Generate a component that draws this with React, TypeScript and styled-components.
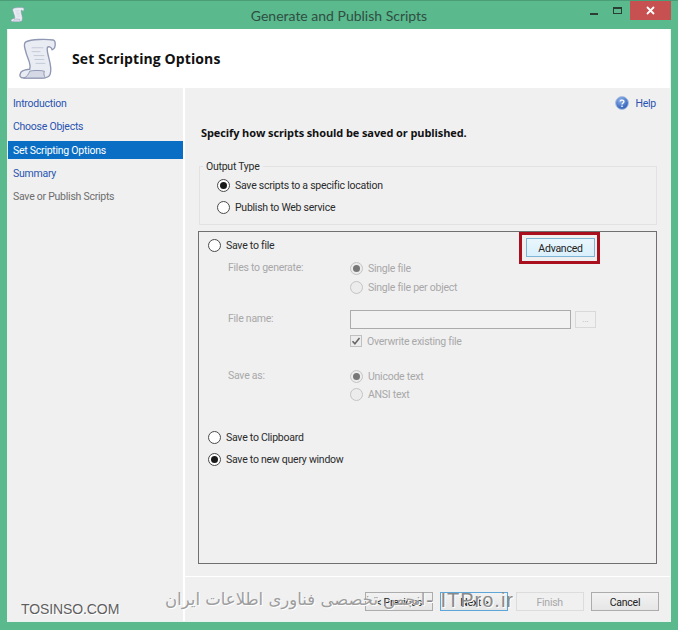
import React from 'react'
import styled, { createGlobalStyle } from 'styled-components'

const Global = createGlobalStyle`
  html, body { margin: 0; padding: 0; background: #5ab98d; }
  * { box-sizing: border-box; }
`

const Window = styled.div`
  position: relative;
  width: 678px;
  height: 630px;
  overflow: hidden;
  display: flex;
  flex-direction: column;
  padding: 0 7px 8px 7px;
  background: #5ab98d;
  border-top: 1px solid #4a9d77;
  font-family: Roboto, 'Liberation Sans', sans-serif;
  font-size: 10.5px;
  letter-spacing: -0.25px;
  color: #2b2b2b;
`
const TitleBar = styled.div`
  position: relative;
  height: 28px;
  flex: none;
  display: flex;
  align-items: center;
  justify-content: center;
  font-family: Lato, 'Liberation Sans', sans-serif;
  font-size: 14px;
  letter-spacing: 0;
  color: #2f4f43;
`
const TitleIcon = styled.div`
  position: absolute;
  left: 3px;
  top: 6px;
  width: 16px;
  height: 16px;
`
const WindowButtons = styled.div`
  position: absolute;
  top: 0;
  right: 0;
  display: flex;
  align-items: flex-start;
`
const MinButton = styled.div`
  width: 8px;
  height: 2px;
  margin: 12px 15px 0 0;
  background: #2b3d35;
`
const MaxButton = styled.div`
  width: 9px;
  height: 7px;
  margin: 6px 8px 0 0;
  border: 1px solid #2b3d35;
  border-top-width: 2px;
`
const CloseButton = styled.div`
  width: 41px;
  height: 19px;
  background: #c75050;
  color: #fff;
  display: flex;
  align-items: center;
  justify-content: center;
`
const Client = styled.div`
  flex: 1;
  display: flex;
  flex-direction: column;
  min-height: 0;
  background: #f0f0f1;
  border: 1px solid #e8f2ee;
  border-top: none;
`
const Header = styled.div`
  height: 59px;
  flex: none;
  background: #fff;
  display: flex;
  align-items: center;
  padding-left: 9px;
  gap: 14px;
`
const HeaderTitle = styled.div`
  font-family: 'Open Sans', 'Liberation Sans', sans-serif;
  font-size: 14px;
  font-weight: 700;
  letter-spacing: 0.1px;
  color: #111;
`
const Body = styled.div`
  flex: 1;
  display: flex;
  min-height: 0;
`
const Sidebar = styled.div`
  width: 175px;
  flex: none;
  padding-top: 6px;
  display: flex;
  flex-direction: column;
  gap: 5.25px;
`
const NavItem = styled.div<{ $state: 'link' | 'active' | 'muted' }>`
  height: 18px;
  line-height: 19px;
  padding-left: 5px;
  color: ${(p) => (p.$state === 'link' ? '#2a53b0' : p.$state === 'active' ? '#fff' : '#6d6d6d')};
  background: ${(p) => (p.$state === 'active' ? '#0a6fc4' : 'transparent')};
`
const Main = styled.div`
  flex: 1;
  display: flex;
  flex-direction: column;
  border-left: 2px solid #fff;
  min-width: 0;
`
const Content = styled.div`
  flex: 1;
  display: flex;
  flex-direction: column;
  padding: 6px 13px 12px 13px;
  min-height: 0;
`
const HelpRow = styled.div`
  height: 18px;
  display: flex;
  align-items: center;
  justify-content: flex-end;
  gap: 6px;
  padding-right: 1px;
  color: #2a53b0;
`
const Heading = styled.div`
  font-family: 'Open Sans', 'Liberation Sans', sans-serif;
  font-size: 11px;
  margin-top: 12px;
  padding-left: 3px;
  height: 18px;
  line-height: 18px;
  font-weight: 700;
  letter-spacing: -0.1px;
  color: #111;
`
const OutputGroup = styled.fieldset`
  margin: 17px 0 0 1px;
  height: 66px;
  padding: 2px 0 0 17px;
  border: 1px solid #e2e2e3;
  display: flex;
  flex-direction: column;
  gap: 4px;
`
const Legend = styled.legend`
  padding: 1px 3px 0;
  margin-left: -14px;
  line-height: 14px;
`
const OptionsBox = styled.div`
  position: relative;
  flex: 1;
  margin-top: 6px;
  border: 1px solid #707070;
  padding: 4px 0 0 9px;
  display: flex;
  flex-direction: column;
  min-height: 0;
`
const Option = styled.div<{ $muted?: boolean }>`
  height: 18px;
  display: flex;
  align-items: center;
  gap: 5px;
  color: ${(p) => (p.$muted ? '#a8a8a8' : '#2b2b2b')};
`
const Radio = styled.span<{ $checked?: boolean; $muted?: boolean }>`
  width: 13px;
  height: 13px;
  flex: none;
  border-radius: 50%;
  border: 1px solid ${(p) => (p.$muted ? '#c4c4c4' : '#4a4a4a')};
  background: ${(p) => (p.$muted ? '#ececec' : '#fff')};
  display: flex;
  align-items: center;
  justify-content: center;
  &::after {
    content: '';
    width: 7px;
    height: 7px;
    border-radius: 50%;
    background: ${(p) => (p.$checked ? (p.$muted ? '#777' : '#1a1a1a') : 'transparent')};
  }
`
const Check = styled.span`
  width: 12px;
  height: 12px;
  flex: none;
  border: 1px solid #c0c0c0;
  background: #ececec;
  display: flex;
  align-items: center;
  justify-content: center;
`
const FileRows = styled.div`
  display: grid;
  grid-template-columns: 122px 1fr;
  margin: 5px 0 0 20px;
  color: #a8a8a8;
`
const RowLabel = styled.div<{ $top: number }>`
  margin-top: ${(p) => p.$top}px;
  height: 18px;
  line-height: 18px;
`
const Controls = styled.div<{ $top: number; $gap?: number }>`
  margin-top: ${(p) => p.$top}px;
  display: flex;
  flex-direction: column;
  gap: ${(p) => p.$gap ?? 0}px;
`
const FileNameRow = styled.div`
  display: flex;
  gap: 4px;
  height: 19px;
`
const FileInput = styled.div`
  width: 221px;
  height: 19px;
  background: #f2f2f3;
  border: 1px solid #ababab;
`
const BrowseButton = styled.div`
  width: 21px;
  height: 17px;
  margin-top: 1px;
  border: 1px solid #d9d9d9;
  color: #b5b5b5;
  font-size: 9px;
  line-height: 14px;
  text-align: center;
`
const BottomOptions = styled.div`
  margin-top: 25px;
  display: flex;
  flex-direction: column;
  gap: 4px;
`
const Highlight = styled.div`
  position: absolute;
  top: 0;
  right: 56px;
  width: 81px;
  height: 32px;
  border: 3px solid #a90f1d;
  padding: 3px 2px 3px 4px;
`
const FocusButton = styled.div`
  height: 19px;
  padding-top: 1px;
  background: linear-gradient(#eaf6fd, #d9f0fc);
  border: 1px solid #7eb4d6;
  display: flex;
  align-items: center;
  justify-content: center;
  color: #222;
`
const Footer = styled.div`
  flex: none;
  height: 45px;
  border-top: 1px solid #fff;
  display: flex;
  justify-content: flex-end;
  gap: 7.3px;
  padding: 15px 11px 0 0;
`
const WizardButton = styled.div<{ $variant?: 'default' | 'focus' | 'off' }>`
  width: 68px;
  height: 19px;
  padding-top: 1px;
  display: flex;
  align-items: center;
  justify-content: center;
  border: 1px solid ${(p) => (p.$variant === 'focus' ? '#5ea5d8' : p.$variant === 'off' ? '#dcdcdc' : '#acacac')};
  background: ${(p) => (p.$variant === 'off' ? '#f0f0f1' : 'linear-gradient(#f2f2f2, #e6e6e6)')};
  color: ${(p) => (p.$variant === 'off' ? '#a8a8a8' : '#222')};
`
const Watermark = styled.div`
  position: absolute;
  left: 165px;
  top: 589px;
  width: 349px;
  display: flex;
  justify-content: space-between;
  align-items: center;
  color: #9e9e9e;
  font-family: 'DejaVu Sans', sans-serif;
  font-size: 16.5px;
  letter-spacing: 0;
  line-height: 20px;
  white-space: nowrap;
  text-shadow: 1px 1px 0 #fff;
`
const WatermarkLatin = styled.span`
  font-family: 'Liberation Sans', sans-serif;
  font-size: 20px;
  letter-spacing: 1px;
  color: #8a8a8a;
`
const SiteMark = styled.div`
  position: absolute;
  left: 21px;
  top: 600px;
  font-family: 'Liberation Sans', sans-serif;
  font-size: 14px;
  letter-spacing: -0.1px;
  color: #5f5f5f;
  text-shadow: 1px 1px 0 #fff;
`

const ScrollIcon = ({ size }: { size: number }) => (
  <svg width={size} height={size} viewBox="0 0 40 42">
    <path
      d="M8 4c6-3 21-3 28-2 3 1 3 9-1 10-1-3-4-4-5-2-1 7 6 18 3 27-1 3-4 4-8 4H6c-4 0-5-2-3-6 2-2 7-3 9-3 2-6-3-12-4-18C7 10 5 6 8 4z"
      fill="#e9ecf3"
      stroke="#8f97b3"
      strokeWidth="1.4"
    />
    <path d="M12 34c3-1 12-1 15 0-1 3 0 5 1 7H6c3-1 5-4 6-7z" fill="#d5d9e6" stroke="#8f97b3" strokeWidth="1" />
    <path d="M14 10h12M14 14h9M16 18h11M17 22h10M18 26h10" stroke="#c3c8d6" strokeWidth="1" />
  </svg>
)

const HelpIcon = () => (
  <svg width="14" height="14" viewBox="0 0 14 14">
    <defs>
      <radialGradient id="helpFill" cx="0.4" cy="0.3" r="0.8">
        <stop offset="0" stopColor="#8fb4ea" />
        <stop offset="1" stopColor="#1d4fb0" />
      </radialGradient>
    </defs>
    <circle cx="7" cy="7" r="6.4" fill="url(#helpFill)" stroke="#a9bfe0" />
    <path d="M5 5.4c.3-1.6 4-1.6 4 .2 0 1.3-2 1.4-2 2.8" fill="none" stroke="#fff" strokeWidth="1.3" />
    <rect x="6.3" y="9.6" width="1.4" height="1.4" fill="#fff" />
  </svg>
)

const CheckMark = () => (
  <svg width="10" height="10" viewBox="0 0 10 10">
    <path d="M1.5 5.2l2.4 2.6L8.5 2" fill="none" stroke="#666" strokeWidth="1.6" />
  </svg>
)

const CloseGlyph = () => (
  <svg width="9" height="9" viewBox="0 0 9 9">
    <path d="M1 1l7 7M8 1L1 8" stroke="#fff" strokeWidth="1.8" />
  </svg>
)

export default function App() {
  return (
    <>
      <Global />
      <Window>
        <TitleBar>
          <TitleIcon>
            <ScrollIcon size={15} />
          </TitleIcon>
          Generate and Publish Scripts
          <WindowButtons>
            <MinButton />
            <MaxButton />
            <CloseButton>
              <CloseGlyph />
            </CloseButton>
          </WindowButtons>
        </TitleBar>
        <Client>
          <Header>
            <ScrollIcon size={41} />
            <HeaderTitle>Set Scripting Options</HeaderTitle>
          </Header>
          <Body>
            <Sidebar>
              <NavItem $state="link">Introduction</NavItem>
              <NavItem $state="link">Choose Objects</NavItem>
              <NavItem $state="active">Set Scripting Options</NavItem>
              <NavItem $state="link">Summary</NavItem>
              <NavItem $state="muted">Save or Publish Scripts</NavItem>
            </Sidebar>
            <Main>
              <Content>
                <HelpRow>
                  <HelpIcon />
                  Help
                </HelpRow>
                <Heading>Specify how scripts should be saved or published.</Heading>
                <OutputGroup>
                  <Legend>Output Type</Legend>
                  <Option>
                    <Radio $checked />
                    Save scripts to a specific location
                  </Option>
                  <Option>
                    <Radio />
                    Publish to Web service
                  </Option>
                </OutputGroup>
                <OptionsBox>
                  <Option>
                    <Radio />
                    Save to file
                  </Option>
                  <Highlight>
                    <FocusButton>Advanced</FocusButton>
                  </Highlight>
                  <FileRows>
                    <RowLabel $top={0}>Files to generate:</RowLabel>
                    <Controls $top={0} $gap={1}>
                      <Option $muted>
                        <Radio $muted $checked />
                        Single file
                      </Option>
                      <Option $muted>
                        <Radio $muted />
                        Single file per object
                      </Option>
                    </Controls>
                    <RowLabel $top={14}>File name:</RowLabel>
                    <Controls $top={14} $gap={3}>
                      <FileNameRow>
                        <FileInput />
                        <BrowseButton>...</BrowseButton>
                      </FileNameRow>
                      <Option $muted>
                        <Check>
                          <CheckMark />
                        </Check>
                        Overwrite existing file
                      </Option>
                    </Controls>
                    <RowLabel $top={17}>Save as:</RowLabel>
                    <Controls $top={17}>
                      <Option $muted>
                        <Radio $muted $checked />
                        Unicode text
                      </Option>
                      <Option $muted>
                        <Radio $muted />
                        ANSI text
                      </Option>
                    </Controls>
                  </FileRows>
                  <BottomOptions>
                    <Option>
                      <Radio />
                      Save to Clipboard
                    </Option>
                    <Option>
                      <Radio $checked />
                      Save to new query window
                    </Option>
                  </BottomOptions>
                </OptionsBox>
              </Content>
              <Footer>
                <WizardButton>&lt; Previous</WizardButton>
                <WizardButton $variant="focus">Next &gt;</WizardButton>
                <WizardButton $variant="off">Finish</WizardButton>
                <WizardButton>Cancel</WizardButton>
              </Footer>
            </Main>
          </Body>
        </Client>
        <Watermark>
          <span dir="rtl">انجمن تخصصی فناوری اطلاعات ایران</span>
          <WatermarkLatin>- ITPro.ir</WatermarkLatin>
        </Watermark>
        <SiteMark>TOSINSO.COM</SiteMark>
      </Window>
    </>
  )
}
